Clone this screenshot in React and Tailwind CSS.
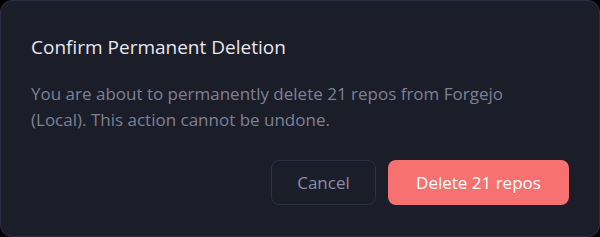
export default function App() {
  return (
    <div className="w-[600px] h-[237px] bg-black" style={{ fontFamily: '"Open Sans", "Noto Sans", sans-serif' }}>
      <div className="h-full rounded-xl border border-[#2a2e44] bg-[#1b1d28] px-[30px] pt-8 pb-8 flex flex-col">
        <h2 className="text-[19px] leading-7 font-medium text-[#e6e8f0]">Confirm Permanent Deletion</h2>
        <p className="mt-5 text-[17px] leading-[26px] text-[#7d8197] pr-6">
          You are about to permanently delete 21 repos from Forgejo (Local). This action cannot be undone.
        </p>
        <div className="mt-[27px] flex justify-end gap-3">
          <button className="h-[45px] w-[105px] rounded-lg border border-[#2c3048] text-[17px] font-medium text-[#8a8ea6]">
            Cancel
          </button>
          <button className="h-[45px] w-[181px] rounded-lg bg-[#f87171] text-[17px] font-medium text-white">
            Delete 21 repos
          </button>
        </div>
      </div>
    </div>
  );
}
